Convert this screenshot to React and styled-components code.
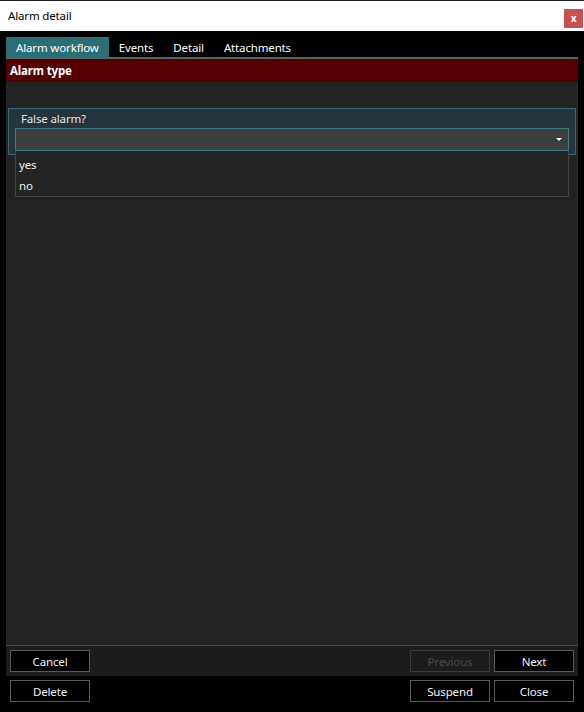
import React from "react";
import styled, { createGlobalStyle } from "styled-components";

const Global = createGlobalStyle`
  *, *::before, *::after {
    box-sizing: border-box;
  }
  html, body {
    margin: 0;
    padding: 0;
    background: #000;
  }
  body {
    font-family: "Noto Sans", "Open Sans", sans-serif;
    font-size: 11.5px;
    letter-spacing: -0.15px;
  }
`;

const Window = styled.div`
  width: 584px;
  height: 712px;
  display: flex;
  flex-direction: column;
  background: #000;
  overflow: hidden;
`;

const TitleBar = styled.div`
  height: 31px;
  flex: none;
  display: flex;
  align-items: center;
  justify-content: space-between;
  background: #fff;
  border-top: 1px solid #1e1e1e;
  padding: 0 1px 1px 8px;
  color: #000;
`;

const CloseBox = styled.div`
  width: 19px;
  height: 19px;
  margin-top: 5px;
  background: #c75050;
  color: #fff;
  font-size: 10px;
  font-weight: bold;
  display: flex;
  align-items: center;
  justify-content: center;
  line-height: 1;
`;

const Body = styled.div`
  flex: 1;
  display: flex;
  flex-direction: column;
  padding: 6px 6px 0;
  min-height: 0;
`;

const Tabs = styled.div`
  display: flex;
  height: 20px;
  flex: none;
`;

const Tab = styled.div`
  padding: 0 10px;
  height: 20px;
  display: flex;
  align-items: center;
  color: #fff;
  background: ${(p) => (p.$active ? "#2c6e76" : "transparent")};
  white-space: nowrap;
`;

const TabRule = styled.div`
  height: 2px;
  flex: none;
  background: #55636a;
`;

const Panel = styled.div`
  flex: 1;
  display: flex;
  flex-direction: column;
  min-height: 0;
  background: #1e1e1e;
`;

const Header = styled.div`
  height: 23px;
  flex: none;
  display: flex;
  align-items: center;
  padding-left: 4px;
  background: #550000;
  color: #fff;
  font-weight: bold;
`;

const Content = styled.div`
  flex: 1;
  background: #232323;
  border-bottom: 1px solid #4a4a4a;
  border-right: 1px solid #2e2e2e;
  padding: 26px 1px 0 2px;
`;

const Question = styled.div`
  position: relative;
  border: 1px solid #3a6676;
  background: #25343d;
  padding: 0 6px 3px 6px;
`;

const QuestionLabel = styled.div`
  height: 19px;
  display: flex;
  align-items: center;
  padding-left: 6px;
  color: #e6e6e6;
`;

const Combo = styled.div`
  height: 23px;
  border: 1px solid #3c7a80;
  background: #3d3d3d;
  display: flex;
  align-items: center;
  justify-content: flex-end;
  padding-right: 6px;
`;

const Arrow = styled.div`
  width: 0;
  height: 0;
  border-left: 3px solid transparent;
  border-right: 3px solid transparent;
  border-top: 3px solid #fff;
`;

const DropList = styled.div`
  position: absolute;
  left: 6px;
  right: 6px;
  top: 42px;
  background: #242424;
  border: 1px solid #444;
  border-top: none;
  padding-top: 3px;
  z-index: 2;
`;

const Option = styled.div`
  height: 21px;
  display: flex;
  align-items: center;
  padding-left: 3px;
  color: #f0f0f0;
`;

const ActionRow = styled.div`
  height: 30px;
  flex: none;
  display: flex;
  align-items: center;
  gap: 4px;
  padding: 0 4px;
  background: #1d1d1d;
`;

const BottomRow = styled.div`
  height: 36px;
  flex: none;
  display: flex;
  align-items: flex-start;
  gap: 4px;
  padding: 4px 10px 0;
`;

const Spacer = styled.div`
  flex: 1;
`;

const Button = styled.button`
  width: 80px;
  height: 22px;
  padding: 0;
  background: ${(p) => (p.disabled ? "#1d1d1d" : "#000")};
  border: 1px solid ${(p) => (p.disabled ? "#3a3a3a" : "#5a5a5a")};
  color: ${(p) => (p.disabled ? "#4c4c4c" : "#f2f2f2")};
  font-family: inherit;
  font-size: 11.5px;
  letter-spacing: inherit;
  cursor: default;
`;

export default function App() {
  return (
    <>
      <Global />
      <Window>
        <TitleBar>
          <span>Alarm detail</span>
          <CloseBox>x</CloseBox>
        </TitleBar>
        <Body>
          <Tabs>
            <Tab $active>Alarm workflow</Tab>
            <Tab>Events</Tab>
            <Tab>Detail</Tab>
            <Tab>Attachments</Tab>
          </Tabs>
          <TabRule />
          <Panel>
            <Header>Alarm type</Header>
            <Content>
              <Question>
                <QuestionLabel>False alarm?</QuestionLabel>
                <Combo>
                  <Arrow />
                </Combo>
                <DropList>
                  <Option>yes</Option>
                  <Option>no</Option>
                </DropList>
              </Question>
            </Content>
            <ActionRow>
              <Button>Cancel</Button>
              <Spacer />
              <Button disabled>Previous</Button>
              <Button>Next</Button>
            </ActionRow>
          </Panel>
        </Body>
        <BottomRow>
          <Button>Delete</Button>
          <Spacer />
          <Button>Suspend</Button>
          <Button>Close</Button>
        </BottomRow>
      </Window>
    </>
  );
}
